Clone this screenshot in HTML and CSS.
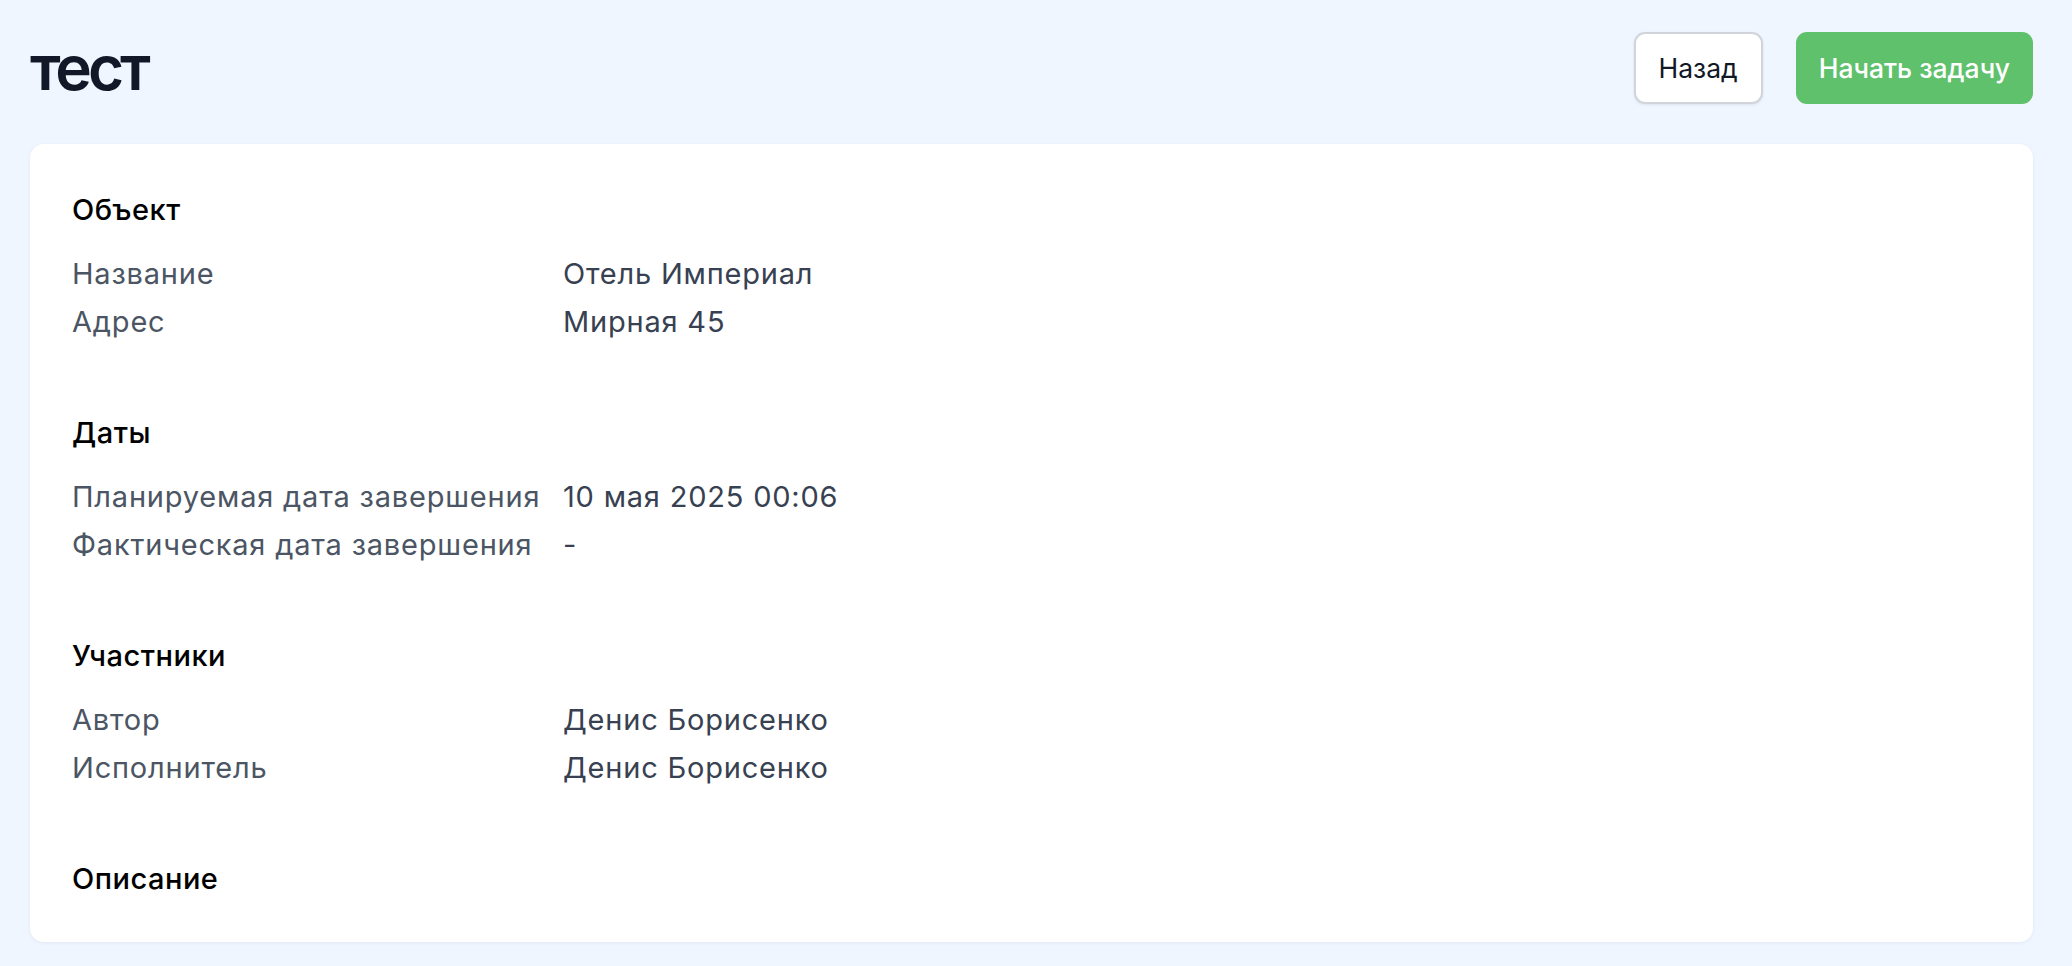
FILE: index.html
```html
<!DOCTYPE html>
<html lang="ru">
<head>
    <meta charset="UTF-8">
    <meta name="viewport" content="width=device-width, initial-scale=1.0">
    <title>тест</title>
    <link rel="stylesheet" href="styles.css">
</head>
<body>
    <div class="page">
        <div class="task-header">
            <h1 class="task-title">тест</h1>
            <div class="task-actions">
                <button class="btn btn-back">Назад</button>
                <button class="btn btn-start">Начать задачу</button>
            </div>
        </div>

        <div class="task-card">
            <div class="section">
                <div class="section-title">Объект</div>
                <div class="info-grid">
                    <div class="info-label">Название</div>
                    <div class="info-value">Отель Империал</div>
                    <div class="info-label">Адрес</div>
                    <div class="info-value">Мирная 45</div>
                </div>
            </div>

            <div class="section">
                <div class="section-title">Даты</div>
                <div class="info-grid">
                    <div class="info-label">Планируемая дата завершения</div>
                    <div class="info-value">10 мая 2025 00:06</div>
                    <div class="info-label">Фактическая дата завершения</div>
                    <div class="info-value">-</div>
                </div>
            </div>

            <div class="section">
                <div class="section-title">Участники</div>
                <div class="info-grid">
                    <div class="info-label">Автор</div>
                    <div class="info-value">Денис Борисенко</div>
                    <div class="info-label">Исполнитель</div>
                    <div class="info-value">Денис Борисенко</div>
                </div>
            </div>

            <div class="section">
                <div class="section-title">Описание</div>
            </div>
        </div>
    </div>
</body>
</html>
```

FILE: styles.css
```css
* {
    margin: 0;
    padding: 0;
    box-sizing: border-box;
}

body {
    background: #eff6ff;
    font-family: Inter, 'Noto Sans', sans-serif;
    min-height: 100vh;
}

.page {
    padding: 32px 39px 23px 30px;
}

.task-header {
    display: flex;
    justify-content: space-between;
    align-items: center;
    margin-bottom: 40px;
}

.task-title {
    font-size: 62px;
    font-weight: 600;
    line-height: 72px;
    color: #111827;
    letter-spacing: -4px;
}

.task-actions {
    display: flex;
    gap: 33px;
}

.btn {
    height: 72px;
    padding: 0 23px;
    border-radius: 11px;
    font-family: Inter, sans-serif;
    font-size: 26.5px;
    cursor: pointer;
}

.btn-back {
    background: white;
    color: #111827;
    border: 2px solid #d1d5db;
    box-shadow: 0 1px 3px rgba(0, 0, 0, 0.08);
}

.btn-start {
    background: #5fc16b;
    color: white;
    border: none;
    font-weight: 500;
}

.task-card {
    background: white;
    border-radius: 14px;
    box-shadow: 0 1px 4px rgba(0, 0, 0, 0.06);
    padding: 42px 42px 39px;
    display: flex;
    flex-direction: column;
    gap: 63px;
}

.section-title {
    font-size: 29px;
    line-height: 48px;
    font-weight: 500;
    letter-spacing: 0.5px;
    color: #000;
    margin-bottom: 16px;
}

.section:last-child .section-title {
    margin-bottom: 0;
}

.info-grid {
    display: grid;
    grid-template-columns: 470px 1fr;
    column-gap: 21px;
    font-size: 29px;
    line-height: 48px;
    letter-spacing: 0.8px;
}

.info-label {
    color: #4b5563;
}

.info-value {
    color: #374151;
}
```
